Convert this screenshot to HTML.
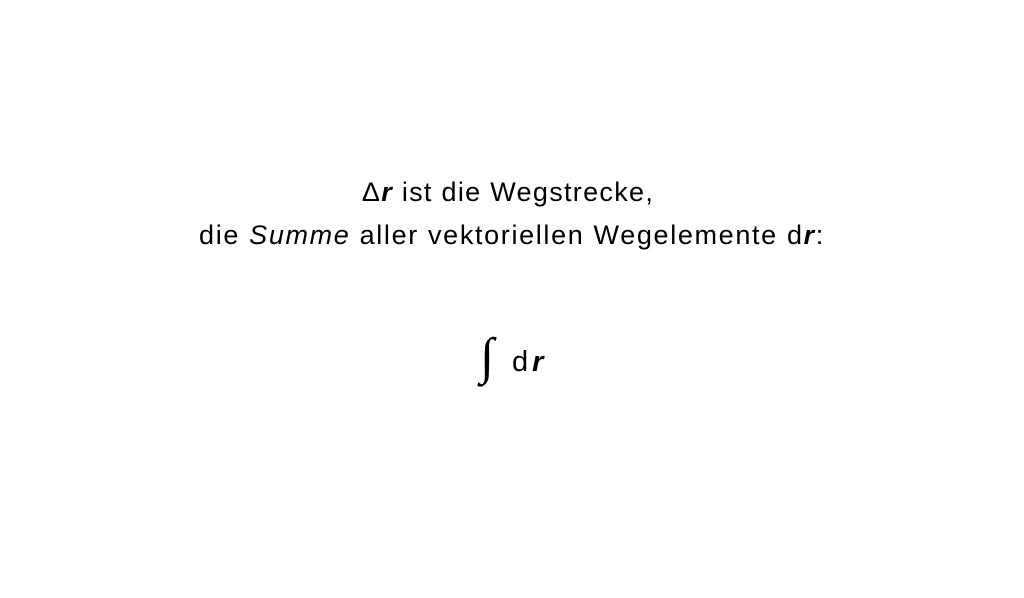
<!DOCTYPE html>
<html><head><style>
html,body{margin:0;padding:0;background:#fff;width:1024px;height:598px;overflow:hidden}
.t{position:absolute;left:0;width:1024px;text-align:center;font-family:"Liberation Sans","DejaVu Sans",sans-serif;font-size:27px;color:#000;white-space:nowrap;line-height:1;letter-spacing:1.3px}
b{font-style:italic;font-weight:bold}
</style></head><body>
<div class="t" style="top:179px;left:-4px;letter-spacing:1.3px">Δ<b>r</b> ist die Wegstrecke,</div>
<div class="t" style="top:222px;left:0px;letter-spacing:1.65px">die <i>Summe</i> aller vektoriellen Wegelemente d<b>r</b>:</div>
<div style="position:absolute;left:480px;top:332px;font-family:'Liberation Serif',serif;font-size:51px;line-height:1">∫</div>
<div style="position:absolute;left:512px;top:348px;font-family:'Liberation Sans',sans-serif;font-size:29px;line-height:1;letter-spacing:4px">d<b>r</b></div>
</body></html>
